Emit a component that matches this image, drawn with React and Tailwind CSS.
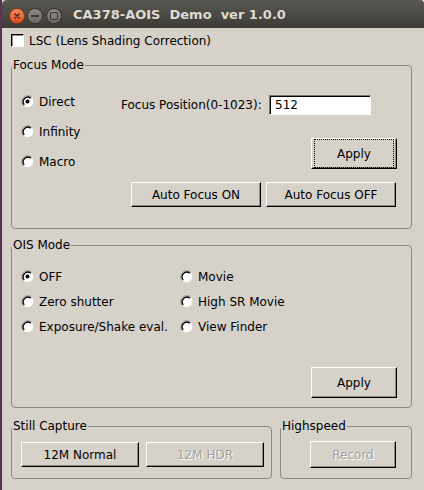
import React from "react";

const font = { fontFamily: '"DejaVu Sans", sans-serif' };

function Radio({ checked }) {
  return (
    <svg width="13" height="13" viewBox="0 0 13 13" className="shrink-0">
      <circle cx="6.5" cy="6.5" r="5.8" fill="#ffffff" />
      <path d="M 2.4 10.6 A 5.8 5.8 0 0 1 10.6 2.4" fill="none" stroke="#8b8883" strokeWidth="1" />
      <path d="M 3.2 9.8 A 4.7 4.7 0 0 1 9.8 3.2" fill="none" stroke="#000000" strokeWidth="1.3" />
      {checked && <circle cx="6.5" cy="6.5" r="2" fill="#000000" />}
    </svg>
  );
}

function RadioRow({ label, checked, h = "h-[19px]" }) {
  return (
    <div className={`flex items-center gap-[5px] ${h}`}>
      <Radio checked={checked} />
      <span className="text-[12px] leading-[14px] text-black whitespace-nowrap">{label}</span>
    </div>
  );
}

function Btn({ children, className = "", focus = false, disabled = false }) {
  return (
    <div
      className={`flex items-center justify-center border-t border-l border-t-white border-l-white border-b border-r border-b-black border-r-black shadow-[inset_-1px_-1px_0_#8f8c86] bg-[#d6d2ca] ${className}`}
    >
      <div
        className={`flex items-center justify-center w-full h-full m-[2px] ${
          focus ? "border border-dotted border-black" : "border border-transparent"
        }`}
      >
        <span
          className={`text-[12px] leading-[14px] whitespace-nowrap ${
            disabled ? "text-[#a29f99] [text-shadow:1px_1px_0_#ffffff]" : "text-black"
          }`}
        >
          {children}
        </span>
      </div>
    </div>
  );
}

function Frame({ title, className = "", children }) {
  return (
    <fieldset className={`border border-[#8c8a85] rounded-[4px] min-w-0 ${className}`}>
      <legend className="ml-0 px-[1px] text-[12px] leading-[14px] text-black">{title}</legend>
      {children}
    </fieldset>
  );
}

export default function App() {
  return (
    <div className="w-[424px] h-[490px] flex bg-[#5e3057] overflow-hidden" style={font}>
      <div className="w-[2px] shrink-0" />
      <div className="flex-1 flex flex-col bg-[#d6d2ca]">
        {/* Title bar */}
        <div className="h-[28px] shrink-0 flex items-center pl-[7px] bg-gradient-to-b from-[#5a5852] to-[#3c3b37] rounded-tl-[5px] rounded-tr-[4px]">
          <div className="w-[16px] h-[16px] rounded-full bg-gradient-to-b from-[#f58a5c] to-[#df4c17] border border-[#8f3a14] flex items-center justify-center mt-[3px]">
            <svg width="8" height="8" viewBox="0 0 8 8">
              <path d="M2 2 L6 6 M6 2 L2 6" stroke="#3a2218" strokeWidth="1.4" strokeLinecap="round" />
            </svg>
          </div>
          <div className="ml-[2px] w-[16px] h-[16px] rounded-full bg-gradient-to-b from-[#8c8a82] to-[#6c6a63] border border-[#35342f] flex items-center justify-center mt-[3px]">
            <div className="w-[8px] h-[2px] bg-[#3a3935]" />
          </div>
          <div className="ml-[3px] w-[16px] h-[16px] rounded-full bg-gradient-to-b from-[#8c8a82] to-[#6c6a63] border border-[#35342f] flex items-center justify-center mt-[3px]">
            <div className="w-[8px] h-[8px] border-[1.5px] border-[#3a3935] rounded-[1px]" />
          </div>
          <span className="ml-[11px] text-[13px] font-bold text-[#dfdbd2] whitespace-pre leading-[16px] mt-[2px]">
            CA378-AOIS  Demo  ver 1.0.0
          </span>
        </div>

        {/* Content */}
        <div className="flex flex-col pl-[9px]">
          {/* LSC */}
          <div className="flex items-center gap-[5px] mt-[6px] h-[13px]">
            <div className="w-[13px] h-[13px] bg-white border-t border-l border-t-black border-l-black border-b border-r border-b-white border-r-white shadow-[inset_1px_1px_0_#8f8c86]" />
            <span className="text-[12px] leading-[14px] text-black">LSC (Lens Shading Correction)</span>
          </div>

          {/* Focus Mode */}
          <Frame title="Focus Mode" className="mt-[11px] w-[401px] h-[171px]">
            <div className="flex">
              <div className="w-[109px] pl-[9px] pt-[20px] flex flex-col gap-[11px]">
                <RadioRow label="Direct" checked />
                <RadioRow label="Infinity" />
                <RadioRow label="Macro" />
              </div>
              <div className="flex flex-col pt-[23px]">
                <div className="flex items-center">
                  <span className="w-[148px] text-[12px] leading-[14px] text-black whitespace-nowrap">
                    Focus Position(0-1023):
                  </span>
                  <div className="w-[102px] h-[20px] bg-white border-t border-l border-t-[#7a7873] border-l-[#7a7873] border-b border-r border-b-white border-r-white shadow-[inset_1px_1px_0_#000000] flex items-center pl-[5px]">
                    <span className="text-[12px] leading-[14px] text-black">512</span>
                  </div>
                </div>
                <Btn focus className="mt-[23px] ml-[190px] w-[86px] h-[31px]">Apply</Btn>
                <div className="flex gap-[5px] mt-[13px] ml-[10px]">
                  <Btn className="w-[130px] h-[25px]">Auto Focus ON</Btn>
                  <Btn className="w-[130px] h-[25px]">Auto Focus OFF</Btn>
                </div>
              </div>
            </div>
          </Frame>

          {/* OIS Mode */}
          <Frame title="OIS Mode" className="mt-[9px] w-[401px] h-[170px]">
            <div className="pl-[9px] pt-[15px] grid grid-cols-[159px_auto] gap-y-[6px]">
              <RadioRow label="OFF" checked />
              <RadioRow label="Movie" />
              <RadioRow label="Zero shutter" />
              <RadioRow label="High SR Movie" />
              <RadioRow label="Exposure/Shake eval." />
              <RadioRow label="View Finder" />
            </div>
            <Btn className="mt-[31px] ml-[299px] w-[86px] h-[31px]">Apply</Btn>
          </Frame>

          {/* Bottom row */}
          <div className="flex mt-[11px]">
            <Frame title="Still Capture" className="w-[261px] h-[60px]">
              <div className="flex gap-[7px] pl-[9px] pt-[9px]">
                <Btn className="w-[118px] h-[25px]">12M Normal</Btn>
                <Btn disabled className="w-[118px] h-[25px]">12M HDR</Btn>
              </div>
            </Frame>
            <Frame title="Highspeed" className="ml-[8px] w-[132px] h-[60px]">
              <div className="pl-[29px] pt-[8px]">
                <Btn disabled className="w-[86px] h-[27px]">Record</Btn>
              </div>
            </Frame>
          </div>
        </div>
      </div>
    </div>
  );
}
